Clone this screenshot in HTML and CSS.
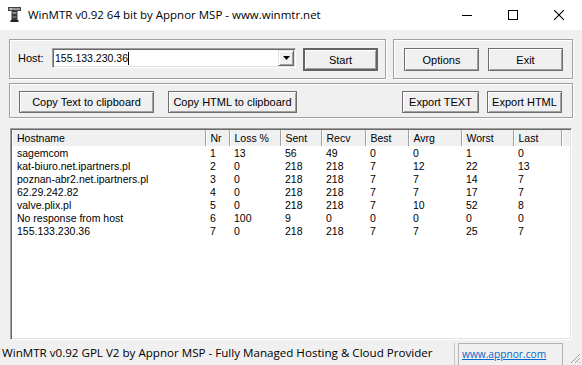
FILE: index.html
```html
<!DOCTYPE html>
<html lang="en">
<head>
    <meta charset="UTF-8">
    <meta name="viewport" content="width=device-width, initial-scale=1.0">
    <title>WinMTR</title>
    <link rel="stylesheet" href="styles.css">
</head>
<body>

<div class="window">
    <div class="titlebar">
        <svg class="app-icon" width="13" height="15" viewBox="0 0 13 15">
            <rect x="0.5" y="0.5" width="12" height="3" fill="#9a9a9a" stroke="#444"/>
            <rect x="2" y="1.5" width="2" height="1" fill="#e8e8e8"/>
            <rect x="3.5" y="4" width="6" height="9" fill="#3a3a3a"/>
            <rect x="4.5" y="5" width="4" height="2" fill="#8c8c8c"/>
            <rect x="4.5" y="9" width="4" height="2" fill="#6a6a6a"/>
            <rect x="2.5" y="13" width="8" height="2" fill="#222"/>
        </svg>
        <span class="title">WinMTR v0.92 64 bit by Appnor MSP - www.winmtr.net</span>
        <div class="controls">
            <span class="ctl">
                <svg width="10" height="10" viewBox="0 0 10 10"><line x1="0" y1="5.5" x2="10" y2="5.5" stroke="#000"/></svg>
            </span>
            <span class="ctl">
                <svg width="10" height="10" viewBox="0 0 10 10"><rect x="0.5" y="0.5" width="9" height="9" fill="none" stroke="#000"/></svg>
            </span>
            <span class="ctl">
                <svg width="10" height="10" viewBox="0 0 10 10"><path d="M0 0 L10 10 M10 0 L0 10" stroke="#000" stroke-width="1.1"/></svg>
            </span>
        </div>
    </div>

    <div class="client">
        <div class="top-row">
            <div class="group host-group">
                <label class="host-label" for="host">Host:</label>
                <div class="combo">
                    <div class="combo-text" id="host">155.133.230.36<span class="caret"></span></div>
                    <div class="combo-btn">
                        <svg width="7" height="4" viewBox="0 0 7 4"><path d="M0 0 H7 L3.5 4 Z" fill="#000"/></svg>
                    </div>
                </div>
                <button class="btn btn-default">Start</button>
            </div>
            <div class="group action-group">
                <button class="btn">Options</button>
                <button class="btn">Exit</button>
            </div>
        </div>

        <div class="group export-group">
            <button class="btn copy-text">Copy Text to clipboard</button>
            <button class="btn copy-html">Copy HTML to clipboard</button>
            <button class="btn export-text">Export TEXT</button>
            <button class="btn">Export HTML</button>
        </div>

        <div class="list">
            <table class="report">
                <colgroup>
                    <col class="c-host">
                    <col class="c-nr">
                    <col class="c-loss">
                    <col class="c-sent">
                    <col class="c-recv">
                    <col class="c-best">
                    <col class="c-avrg">
                    <col class="c-worst">
                    <col class="c-last">
                    <col>
                </colgroup>
                <thead>
                    <tr>
                        <th>Hostname</th>
                        <th>Nr</th>
                        <th>Loss %</th>
                        <th>Sent</th>
                        <th>Recv</th>
                        <th>Best</th>
                        <th>Avrg</th>
                        <th>Worst</th>
                        <th>Last</th>
                        <th class="filler"></th>
                    </tr>
                </thead>
                <tbody id="rows"></tbody>
            </table>
        </div>
    </div>

    <div class="statusbar">
        <div class="status-main">WinMTR v0.92 GPL V2 by Appnor MSP - Fully Managed Hosting &amp; Cloud Provider</div>
        <div class="status-link"><a href="#">www.appnor.com</a></div>
        <svg class="grip" width="12" height="12" viewBox="0 0 12 12">
            <path d="M11 2 L2 11 M11 6 L6 11 M11 10 L10 11" stroke="#a0a0a0" stroke-width="1"/>
        </svg>
    </div>
</div>

<script>
    const hops = [
        ['sagemcom', 1, 13, 56, 49, 0, 0, 1, 0],
        ['kat-biuro.net.ipartners.pl', 2, 0, 218, 218, 7, 12, 22, 13],
        ['poznan-abr2.net.ipartners.pl', 3, 0, 218, 218, 7, 7, 14, 7],
        ['62.29.242.82', 4, 0, 218, 218, 7, 7, 17, 7],
        ['valve.plix.pl', 5, 0, 218, 218, 7, 10, 52, 8],
        ['No response from host', 6, 100, 9, 0, 0, 0, 0, 0],
        ['155.133.230.36', 7, 0, 218, 218, 7, 7, 25, 7]
    ];

    const body = document.getElementById('rows');
    hops.forEach(function(hop) {
        const cells = hop.map(value => `<td>${value}</td>`).join('');
        body.insertAdjacentHTML('beforeend', `<tr>${cells}<td></td></tr>`);
    });
</script>

</body>
</html>
```

FILE: styles.css
```css
* {
    box-sizing: border-box;
}
body {
    margin: 0;
    padding: 0;
    background-color: #f0f0f0;
    font-family: "Liberation Sans", Arial, sans-serif;
    font-size: 11px;
    color: #000;
}
.window {
    width: 582px;
    height: 365px;
    display: flex;
    flex-direction: column;
    overflow: hidden;
}

/* title bar */
.titlebar {
    height: 30px;
    background-color: #fff;
    display: flex;
    align-items: center;
    flex-shrink: 0;
}
.app-icon {
    margin-left: 8px;
    margin-top: -1px;
}
.title {
    margin-left: 7px;
    font-family: "Open Sans", sans-serif;
    font-size: 11.5px;
    margin-top: -1px;
}
.controls {
    margin-left: auto;
    display: flex;
    height: 30px;
}
.ctl {
    width: 46px;
    height: 30px;
    display: flex;
    align-items: center;
    justify-content: center;
}

/* client area */
.client {
    flex: 1;
    padding: 0 9px;
}
.top-row {
    display: flex;
    gap: 7px;
    margin-top: 9px;
}
.group {
    border: 1px solid #a0a0a0;
    box-shadow: inset 1px 1px 0 #fff, 1px 1px 0 #fff;
    display: flex;
    align-items: flex-start;
}
.host-group {
    width: 377px;
    height: 40px;
    padding: 8px 0 0 8px;
}
.host-label {
    width: 34px;
    line-height: 20px;
}
.combo {
    width: 244px;
    height: 20px;
    background-color: #fff;
    border: 1px solid;
    border-color: #a0a0a0 #fff #fff #a0a0a0;
    box-shadow: inset 1px 1px 0 #696969, inset -1px -1px 0 #e3e3e3;
    display: flex;
    align-items: center;
    padding: 1px 1px 1px 2px;
}
.combo-text {
    flex: 1;
    line-height: 14px;
    display: flex;
    align-items: center;
    font-size: 10.5px;
}
.caret {
    display: inline-block;
    width: 1px;
    height: 13px;
    background-color: #000;
}
.combo-btn {
    width: 16px;
    height: 16px;
    background-color: #f0f0f0;
    border: 1px solid;
    border-color: #e3e3e3 #696969 #696969 #e3e3e3;
    box-shadow: inset 1px 1px 0 #fff, inset -1px -1px 0 #a0a0a0;
    display: flex;
    align-items: center;
    justify-content: center;
}
.btn {
    height: 23px;
    width: 75px;
    padding: 0;
    background-color: #f0f0f0;
    border: 1px solid #6e6e6e;
    box-shadow: inset 1px 1px 0 #fff, inset -1px -1px 0 #a0a0a0;
    font-family: "Liberation Sans", Arial, sans-serif;
    font-size: 11px;
    color: #000;
    cursor: pointer;
}
.btn-default {
    margin-left: 7px;
    border: 2px solid #646464;
    box-shadow: inset 1px 1px 0 #fff, inset -1px -1px 0 #a0a0a0;
}
.action-group {
    width: 180px;
    height: 40px;
    padding: 8px 0 0 10px;
    gap: 9px;
}

.export-group {
    margin-top: 4px;
    height: 35px;
    padding: 7px 10px 0 9px;
}
.export-group .btn {
    height: 22px;
}
.copy-text {
    width: 135px !important;
}
.copy-html {
    width: 129px !important;
    margin-left: 14px;
}
.export-text {
    width: 77px !important;
    margin-left: auto;
    margin-right: 8px;
}

/* report list */
.list {
    margin: 10px 0 0 1px;
    width: 562px;
    height: 212px;
    background-color: #fff;
    border: 1px solid;
    border-color: #a0a0a0 #fff #fff #a0a0a0;
    box-shadow: inset 1px 1px 0 #696969, inset -1px -1px 0 #e3e3e3;
    padding: 1px;
    overflow: hidden;
    font-size: 10.5px;
}
.report {
    width: 100%;
    border-collapse: collapse;
    table-layout: fixed;
}
.c-host { width: 193px; }
.c-nr { width: 24px; }
.c-loss { width: 51px; }
.c-sent { width: 41px; }
.c-recv { width: 44px; }
.c-best { width: 43px; }
.c-avrg { width: 53px; }
.c-worst { width: 52px; }
.c-last { width: 48px; }
.report th {
    height: 16px;
    padding: 0 0 0 5px;
    font-weight: normal;
    text-align: left;
    background-color: #f0f0f0;
    border-right: 1px solid #a0a0a0;
    box-shadow: inset 1px 0 0 #fff;
    white-space: nowrap;
    line-height: 15px;
}
.report th.filler {
    border-right: none;
}
.report td {
    height: 13px;
    line-height: 13px;
    padding: 0 0 0 5px;
    white-space: nowrap;
    overflow: hidden;
}
.report tbody tr:first-child td {
    padding-top: 1px;
    height: 14px;
}

/* status bar */
.statusbar {
    height: 22px;
    margin-top: 3px;
    display: flex;
    flex-shrink: 0;
    font-family: "Open Sans", sans-serif;
    font-size: 11.6px;
}
.status-main {
    width: 455px;
    padding: 2px 0 0 2px;
    border-right: 1px solid #c8c8c8;
    white-space: nowrap;
}
.status-link {
    margin-left: 3px;
    width: 105px;
    border: 1px solid #b4b4b4;
    border-bottom: none;
    padding: 3px 0 0 3px;
    font-size: 10.2px;
}
.status-link a {
    color: #0066cc;
}
.grip {
    margin-left: auto;
    align-self: flex-end;
    margin-right: 1px;
    margin-bottom: 1px;
}
```
